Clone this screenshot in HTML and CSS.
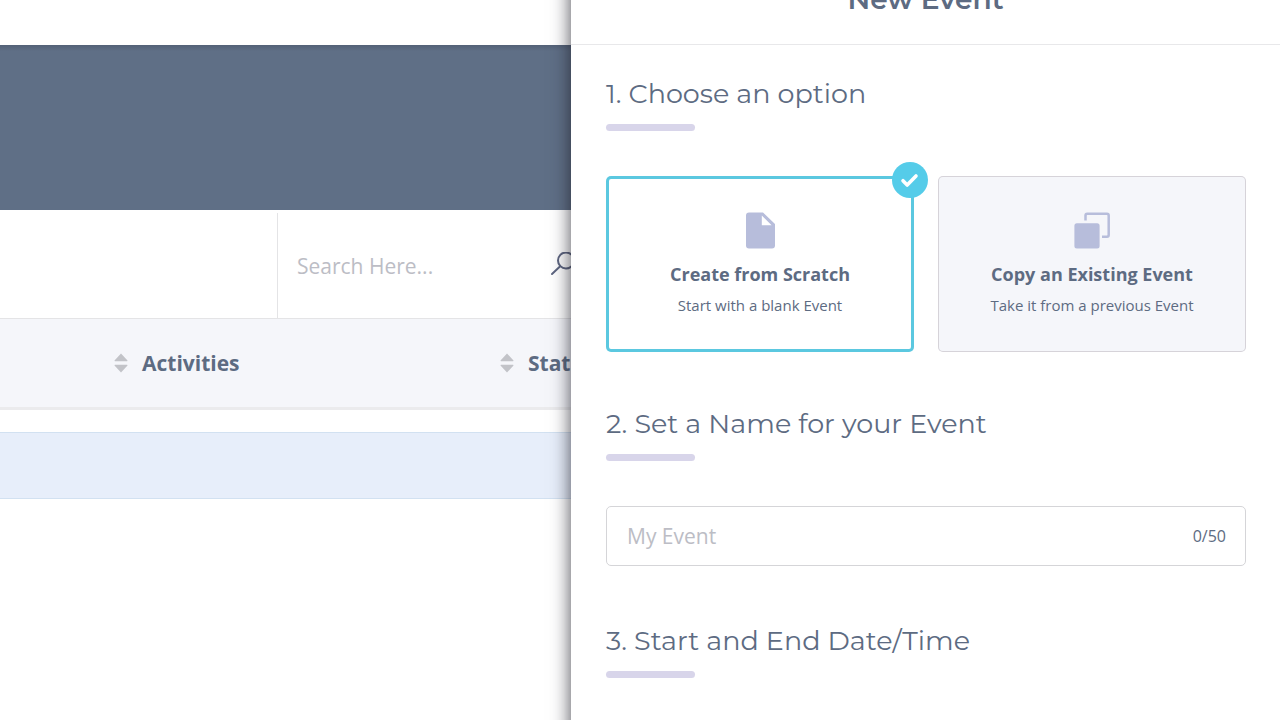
FILE: index.html
```html
<!DOCTYPE html>
<html lang="en">
<head>
<meta charset="utf-8">
<meta name="viewport" content="width=device-width, initial-scale=1">
<title>New Event</title>
<link rel="stylesheet" href="styles.css">
</head>
<body>
<div class="app">
  <main class="page">
    <div class="topbar"></div>
    <div class="banner"></div>
    <div class="toolbar">
      <div class="search">
        <input class="search-input" type="search" placeholder="Search Here..." aria-label="Search events">
        <button class="search-button" type="button" aria-label="Search">
          <svg width="28" height="28" viewBox="0 0 28 28" fill="none" stroke="#5d6580" stroke-width="2" stroke-linecap="round"><circle cx="17" cy="8.500" r="8"/><path d="M11.200 14.300 3 22"/></svg>
        </button>
      </div>
    </div>
    <table class="events">
      <thead>
        <tr>
          <th scope="col"><span class="sort"><svg width="14" height="20" viewBox="0 0 14 20" fill="#c2c3c8"><path d="M7 .5 13.500 7.500Q13.500 8.300 13 8.300H1Q.5 8.300 .5 7.500ZM7 19.500 13.500 12.500Q13.500 11.700 13 11.700H1Q.5 11.700 .5 12.500Z"/></svg>Activities</span></th>
          <th scope="col"><span class="sort"><svg width="14" height="20" viewBox="0 0 14 20" fill="#c2c3c8"><path d="M7 .5 13.500 7.500Q13.500 8.300 13 8.300H1Q.5 8.300 .5 7.500ZM7 19.500 13.500 12.500Q13.500 11.700 13 11.700H1Q.5 11.700 .5 12.500Z"/></svg>Status</span></th>
        </tr>
      </thead>
      <tbody>
        <tr class="spacer"><td colspan="2"></td></tr>
        <tr class="highlight"><td colspan="2"></td></tr>
      </tbody>
    </table>
  </main>

  <aside class="drawer">
    <header class="drawer-header"><h1 class="drawer-title">New Event</h1></header>
    <form class="form">
      <section>
        <h2 class="heading" id="choose">1. Choose an option</h2>
        <div class="options" role="radiogroup" aria-labelledby="choose">
          <label class="option">
            <input class="option-input" type="radio" name="source" checked>
            <svg class="option-icon" width="36" height="36" viewBox="0 0 36 36"><path fill="#b7bddb" fill-rule="evenodd" d="M6.500 .5H21L33 12V33.500Q33 36.500 30 36.500H7Q4 36.500 4 33.500V3.500Q4 .5 7 .5ZM19.800 3.500V13.300H29.600Z"/></svg>
            <span class="option-title">Create from Scratch</span>
            <span class="option-text">Start with a blank Event</span>
            <span class="badge"><svg width="36" height="36" viewBox="0 0 36 36" fill="none" stroke="#fff" stroke-width="3.600" stroke-linecap="round" stroke-linejoin="round"><path d="m11 18.700 4.200 4.300 8.800-9"/></svg></span>
          </label>
          <label class="option">
            <input class="option-input" type="radio" name="source">
            <svg class="option-icon" width="36" height="36" viewBox="0 0 36 36"><rect x=".4" y="11.200" width="25.200" height="25.200" rx="2.500" fill="#b7bddb"/><path fill="none" stroke="#b7bddb" stroke-width="2.500" d="M11.500 8.500V3.500Q11.500 1.800 13.200 1.800H33Q34.700 1.800 34.700 3.500V23Q34.700 24.700 33 24.700H28"/></svg>
            <span class="option-title">Copy an Existing Event</span>
            <span class="option-text">Take it from a previous Event</span>
            <span class="badge"><svg width="36" height="36" viewBox="0 0 36 36" fill="none" stroke="#fff" stroke-width="3.600" stroke-linecap="round" stroke-linejoin="round"><path d="m11 18.700 4.200 4.300 8.800-9"/></svg></span>
          </label>
        </div>
      </section>
      <section>
        <h2 class="heading"><label for="event-name">2. Set a Name for your Event</label></h2>
        <div class="field">
          <input class="field-input" id="event-name" type="text" maxlength="50" placeholder="My Event">
          <span class="counter">0/50</span>
        </div>
      </section>
      <section>
        <h2 class="heading">3. Start and End Date/Time</h2>
      </section>
    </form>
  </aside>
</div>
</body>
</html>
```
FILE: styles.css
```css
* { box-sizing: border-box; }

body {
  margin: 0;
  background: #fff;
  color: #5d6b82;
  font-family: "Open Sans", "Noto Sans", sans-serif;
}

input, button { font: inherit; color: inherit; }

.app {
  display: grid;
  grid-template-columns: minmax(0, 571fr) minmax(0, 709fr);
  height: 100vh;
  overflow: hidden;
}

.page { overflow: hidden; }
.topbar { height: 45px; }

.banner {
  height: 165px;
  background: linear-gradient(#536177, #5f6f86 6px);
}

.toolbar {
  display: flex;
  padding: 3px 0 0 277px;
  height: 109px;
  border-bottom: 1px solid #e4e4e6;
}

.search {
  display: flex;
  flex: none;
  align-items: center;
  border-left: 1px solid #e4e4e6;
  padding-left: 19px;
}

.search-input {
  width: 252px;
  height: 60px;
  padding: 0;
  border: 0;
  outline: 0;
  background: none;
  font-size: 21px;
}

.search-input::placeholder, .field-input::placeholder { color: #bcbdc5; opacity: 1; }

.search-button {
  display: flex;
  padding: 0;
  border: 0;
  background: none;
}

.events {
  width: 886px;
  table-layout: fixed;
  border-collapse: separate;
  border-spacing: 0;
}

.events th {
  height: 91px;
  padding: 0;
  background: #f5f6fa;
  border-bottom: 3px solid #ebebed;
  font-size: 21px;
  font-weight: 700;
  text-align: left;
}

.events th:first-child { width: 500px; padding-left: 114px; }
.events td { padding: 0; }
.sort { display: flex; align-items: center; gap: 14px; }
.spacer td { height: 22px; }

.highlight td {
  height: 67px;
  background: #e7eefa;
  border: solid #d2e1f1;
  border-width: 1px 0;
}

/* Extends past both window edges so the shadow stays even along its height. */
.drawer {
  position: relative;
  margin: -24px 0;
  padding: 24px 0;
  overflow: hidden;
  background: #fff;
  box-shadow: 0 0 18px rgba(30, 30, 40, 0.8);
}

.drawer-header {
  display: flex;
  align-items: flex-end;
  justify-content: center;
  height: 45px;
  padding-bottom: 27px;
  border-bottom: 1px solid #e8e8ea;
}

.drawer-title {
  margin: 0;
  font: 600 28px/36px Montserrat, Inter, sans-serif;
}

.form {
  display: flex;
  flex-direction: column;
  gap: 54px;
  padding: 31px 34px 0 35px;
}

.heading {
  margin: 0 0 45px;
  font: 400 27px/36px Montserrat, Inter, sans-serif;
}

.heading::after {
  content: "";
  display: block;
  width: 89px;
  height: 7px;
  margin-top: 12px;
  border-radius: 4px;
  background: #d8d5ea;
}

.options {
  display: grid;
  grid-template-columns: 1fr 1fr;
  gap: 24px;
}

.option {
  position: relative;
  display: flex;
  flex-direction: column;
  align-items: center;
  height: 176px;
  padding-top: 36px;
  background: #f5f6fa;
  border-radius: 5px;
  box-shadow: inset 0 0 0 1px #d6d3d9;
}

.option:has(:checked) {
  background: #fff;
  box-shadow: inset 0 0 0 3px #5bc8e0;
}

.option-input {
  position: absolute;
  inset: 0;
  margin: 0;
  opacity: 0;
}

.option-icon { overflow: visible; }

.option-title {
  margin-top: 14px;
  font-size: 18px;
  font-weight: 700;
  line-height: 24px;
}

.option-text {
  margin-top: 8px;
  font-size: 15px;
  line-height: 22px;
}

.badge {
  position: absolute;
  top: -14px;
  right: -14px;
  display: none;
  width: 36px;
  height: 36px;
  border-radius: 50%;
  background: #55cce9;
}

.option-input:checked ~ .badge { display: block; }

.field {
  display: flex;
  align-items: center;
  height: 60px;
  margin-bottom: 3px;
  padding: 0 19px 0 20px;
  border: 1px solid #d5d5d8;
  border-radius: 5px;
}

.field-input {
  flex: 1;
  min-width: 0;
  height: 56px;
  padding: 0;
  border: 0;
  outline: 0;
  background: none;
  font-size: 21px;
}

.counter { font-size: 16px; line-height: 24px; }
```
